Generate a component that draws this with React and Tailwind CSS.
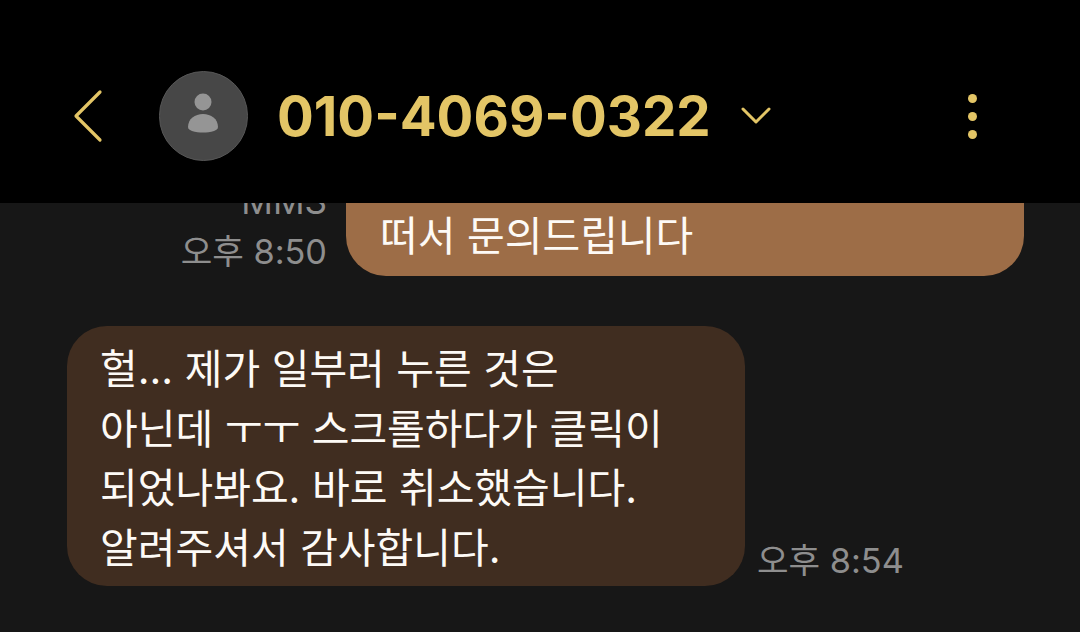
import React from 'react';

function App() {
  return (
    <div className="w-[1080px] h-[632px] overflow-hidden flex flex-col bg-[#171717] font-['Inter','Noto_Sans_CJK_KR',sans-serif]">
      {/* header */}
      <div className="h-[203px] shrink-0 bg-black flex items-start relative z-10 pt-[71px]">
        <svg className="ml-[73px] mt-[18px] w-[32px] h-[54px]" viewBox="0 0 32 54" fill="none" stroke="#e3c566" strokeWidth="3.2" strokeLinecap="round" strokeLinejoin="round">
          <path d="M27 3 L3 27 L27 51" />
        </svg>
        <div className="ml-[54px] w-[89px] h-[90px] rounded-full bg-[#474747] border border-[#575757] flex items-center justify-center">
          <svg className="w-[32px] h-[44px] mb-[3px] mr-[1px]" viewBox="0 0 32 44" fill="#959595">
            <circle cx="16" cy="9" r="8.5" />
            <path d="M1 34 C1 26 8 21 16 21 C24 21 31 26 31 34 C31 36 29 37 27 38 C20 40 12 40 5 38 C3 37 1 36 1 34 Z" />
          </svg>
        </div>
        <div className="ml-[29px] mt-[13px] text-[54.6px] leading-[65px] font-bold text-[#e3c566] whitespace-nowrap">010-4069-0322</div>
        <svg className="ml-[30px] mt-[35px] w-[30px] h-[18px]" viewBox="0 0 30 18" fill="none" stroke="#e3c566" strokeWidth="3" strokeLinecap="round" strokeLinejoin="round">
          <path d="M2 3 L15 16 L28 3" />
        </svg>
        <div className="ml-[197px] mt-[23px] flex flex-col gap-[9px]">
          <span className="w-[9px] h-[9px] rounded-full bg-[#e3c566]" />
          <span className="w-[9px] h-[9px] rounded-full bg-[#e3c566]" />
          <span className="w-[9px] h-[9px] rounded-full bg-[#e3c566]" />
        </div>
      </div>

      {/* messages */}
      <div className="flex-1 min-h-0 overflow-hidden">
        <div className="flex justify-end items-end pr-[56px] mt-[-60px]">
          <div className="flex flex-col items-end mr-[19px] text-[34.3px] leading-[40px] text-[#8e8e8e] pb-[4px]">
            <span className="text-[35px] leading-[40px] mb-[11px]">MMS</span>
            <span>오후 8:50</span>
          </div>
          <div className="w-[678px] h-[133px] rounded-[40px] bg-[#9d6d47] pl-[34px] pb-[10px] flex items-end text-[41px] leading-[59px] text-[#fdfaf6]">
            떠서 문의드립니다
          </div>
        </div>
        <div className="flex items-end mt-[50px] pl-[67px]">
          <div className="w-[678px] h-[260px] rounded-[40px] bg-[#402d20] pl-[33px] pt-[14px] text-[41px] leading-[59.5px] text-[#fdfaf6] whitespace-nowrap">
            <div>헐... 제가 일부러 누른 것은</div>
            <div>아닌데 ㅜㅜ 스크롤하다가 클릭이</div>
            <div>되었나봐요. 바로 취소했습니다.</div>
            <div>알려주셔서 감사합니다.</div>
          </div>
          <div className="ml-[12px] pb-[5px] text-[34.3px] leading-[40px] text-[#8e8e8e] whitespace-nowrap">오후 8:54</div>
        </div>
      </div>
    </div>
  );
}

export default App;
